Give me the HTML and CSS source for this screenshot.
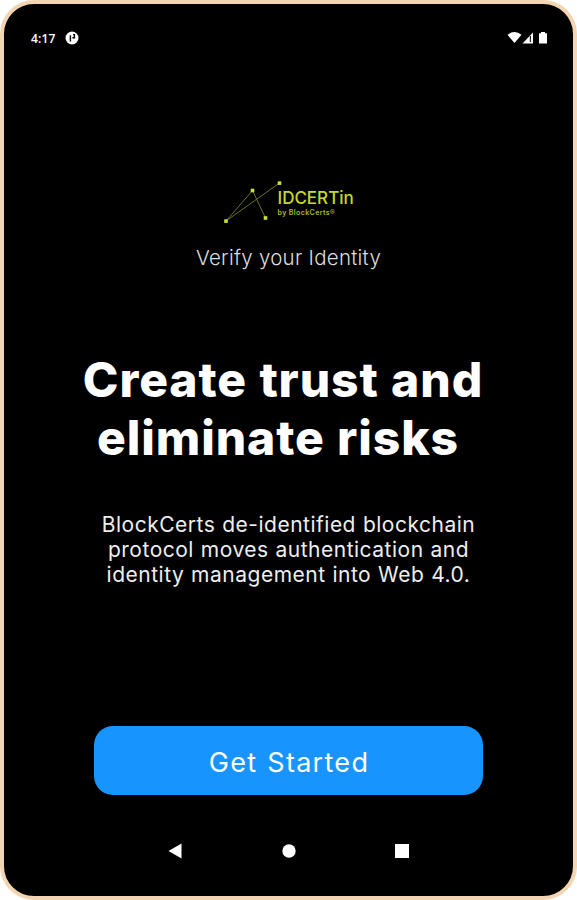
FILE: index.html
```
<!DOCTYPE html>
<html lang="en">
<head>
    <meta charset="UTF-8">
    <meta name="viewport" content="width=device-width, initial-scale=1.0">
    <title>IDCERTin</title>
    <link rel="stylesheet" href="styles.css">
</head>
<body>
    <div class="phone">
        <header class="status-bar">
            <div class="status-left">
                <span class="time">4:17</span>
                <svg class="app-icon" width="14" height="14" viewBox="0 0 14 14">
                    <circle cx="7" cy="7" r="6.5" fill="#fff"/>
                    <path d="M5.4 10.5V4.2M8 3.6h1.400v3.200H7.400" fill="none" stroke="#000" stroke-width="1.4"/>
                </svg>
            </div>
            <svg class="status-icons" width="42" height="14" viewBox="0 0 42 14">
                <path d="M0.5 3.8Q7.5-1.6 14.5 3.8L7.5 12Z" fill="#fff"/>
                <path d="M15.5 12.5L26 1.5v11Z" fill="#fff"/>
                <path d="M23.4 5v6" stroke="#222" stroke-width="1.2"/>
                <path d="M32 2.2h2V1h4v1.2h2v10.3h-8Z" fill="#fff"/>
            </svg>
        </header>

        <main class="content">
            <div class="logo">
                <svg class="logo-mark" width="60" height="44" viewBox="0 0 60 44">
                    <path d="M3 41L29.5 10.5L42.5 38M3 41L56.5 3" fill="none" stroke="#69741a" stroke-width="1"/>
                    <g fill="#cbe234">
                        <rect x="1.2" y="39.3" width="3.6" height="3.6"/>
                        <rect x="27.7" y="8.7" width="3.6" height="3.6"/>
                        <rect x="40.7" y="36.2" width="3.6" height="3.6"/>
                        <rect x="54.7" y="1.3" width="3.6" height="3.6"/>
                    </g>
                </svg>
                <div class="logo-text">
                    <div class="logo-name">IDCERTin</div>
                    <div class="logo-by">by BlockCerts®</div>
                </div>
            </div>
            <p class="tagline">Verify your Identity</p>

            <h1 class="title">
                <span class="title-line">Create trust and</span>
                <span class="title-line second">eliminate risks</span>
            </h1>

            <p class="description">BlockCerts de-identified blockchain<br>protocol moves authentication and<br>identity management into Web 4.0.</p>

            <button class="btn" type="button">Get Started</button>
        </main>

        <nav class="nav-bar">
            <svg width="14" height="16" viewBox="0 0 14 16"><path d="M0.5 8L13.5 0.5v15Z" fill="#fff"/></svg>
            <svg width="14" height="14" viewBox="0 0 14 14"><circle cx="7" cy="7" r="6.7" fill="#fff"/></svg>
            <svg width="14" height="14" viewBox="0 0 14 14"><rect width="14" height="14" fill="#fff"/></svg>
        </nav>
    </div>
</body>
</html>
```
FILE: styles.css
```
* {
    box-sizing: border-box;
    margin: 0;
    padding: 0;
}

body {
    background: #fff;
    color: #fff;
    font-family: Inter, Arial, sans-serif;
}

.phone {
    width: 577px;
    height: 900px;
    background: #000;
    border: 4px solid #f3d5b2;
    border-radius: 34px;
    display: flex;
    flex-direction: column;
    overflow: hidden;
}

.status-bar {
    display: flex;
    justify-content: space-between;
    align-items: center;
    height: 28px;
    margin-top: 20px;
    padding: 0 24px 0 27px;
}

.status-left {
    display: flex;
    align-items: center;
    gap: 9px;
}

.time {
    font-family: "Open Sans", sans-serif;
    font-size: 12px;
    font-weight: 600;
    letter-spacing: 0.2px;
}

.content {
    display: flex;
    flex-direction: column;
    align-items: center;
}

.logo {
    display: flex;
    width: 132px;
    height: 44px;
    margin-top: 128px;
}

.logo-mark {
    flex: none;
}

.logo-text {
    color: #c3da2e;
    padding-top: 8px;
    margin-left: -5px;
    white-space: nowrap;
}

.logo-name {
    font-size: 17px;
    line-height: 20px;
    font-weight: 500;
}

.logo-by {
    font-size: 7px;
    line-height: 9px;
    font-weight: 600;
    letter-spacing: 0.4px;
    color: #a9bd29;
}

.tagline {
    margin-top: 19px;
    font-size: 20.5px;
    line-height: 30px;
    font-weight: 300;
    letter-spacing: 0.25px;
    color: #ddd;
}

.title {
    margin: 78px 11px 0 0;
    font-size: 48px;
    line-height: 58px;
    font-weight: 800;
    letter-spacing: 0.9px;
    word-spacing: 1px;
    text-align: center;
}

.title-line {
    display: block;
}

.title-line.second {
    margin-right: 10px;
}

.description {
    margin-top: 45px;
    font-size: 21px;
    line-height: 25px;
    letter-spacing: 0.5px;
    word-spacing: 0.5px;
    text-align: center;
    color: #eee;
}

.btn {
    width: 389px;
    height: 69px;
    margin-top: 139px;
    border: none;
    border-radius: 19px;
    background: #1894fe;
    color: #fff;
    font-family: inherit;
    font-size: 27px;
    letter-spacing: 1.3px;
    word-spacing: 1px;
    padding: 3px 0 0 1px;
    cursor: pointer;
}

.nav-bar {
    display: flex;
    justify-content: space-between;
    align-items: center;
    width: 241px;
    height: 16px;
    margin: 48px 0 0 164px;
}
```
